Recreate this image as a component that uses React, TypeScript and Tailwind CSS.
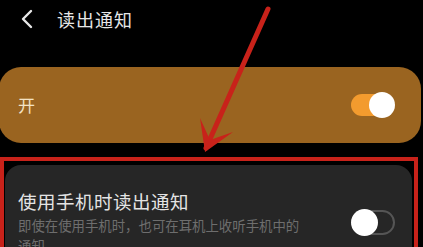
import React from "react";

export default function App() {
  return (
    <div
      className="relative w-[423px] h-[247px] overflow-hidden bg-black"
      style={{ fontFamily: '"Noto Sans CJK SC", "Noto Sans", sans-serif' }}
    >
      {/* header */}
      <div className="flex items-center h-[38px] pl-[20px]">
        <svg width="14" height="20" viewBox="0 0 14 20" className="mr-[23px]">
          <path d="M11 2 L3 10 L11 18" stroke="#e8e8e8" strokeWidth="2.4" fill="none" strokeLinecap="round" strokeLinejoin="round" />
        </svg>
        <span className="text-[18px] leading-none text-[#e6e6e6] tracking-[1px]">读出通知</span>
      </div>

      {/* orange card */}
      <div className="mt-[29px] -ml-[1px] w-[422px] h-[76px] rounded-[22px] bg-[#9a6420] flex items-center justify-between pl-[19px] pr-[28px]">
        <span className="text-[17px] text-[#f3e2c4]">开</span>
        <div className="flex items-center justify-end w-[42px] h-[22px] rounded-full bg-[#f39b2e]">
          <div className="-mr-[2px] w-[26px] h-[26px] rounded-full bg-white shrink-0" />
        </div>
      </div>

      {/* dark card */}
      <div className="mt-[22px] ml-[5px] w-[407px] h-[100px] rounded-t-[16px] bg-[#262626] pl-[13px] pr-[17px] pt-[24px] flex items-start justify-between">
        <div className="flex flex-col">
          <div className="text-[18.5px] leading-[24px] text-[#e4e4e4] tracking-[0.5px]">使用手机时读出通知</div>
          <div className="mt-[2px] w-[284px] text-[13.4px] leading-[20px] text-[#6e6e6e]">
            即使在使用手机时，也可在耳机上收听手机中的通知。
          </div>
        </div>
        <div className="mt-[21px] flex items-center w-[43px] h-[25px] rounded-full border-2 border-[#555555]">
          <div className="-ml-[3px] w-[27px] h-[27px] rounded-full bg-white shrink-0" />
        </div>
      </div>

      {/* red annotation box */}
      <div className="absolute left-0 top-[157px] w-[418px] h-[110px] border-[4px] border-[#c8221a]" />

      {/* red arrow */}
      <svg className="absolute left-0 top-0" width="423" height="247" viewBox="0 0 423 247">
        <path d="M268 9 L206 148" stroke="#c8221a" strokeWidth="5" strokeLinecap="round" fill="none" />
        <path d="M205 152 L200 118 L210 140 L233 132 Z" fill="#c8221a" />
      </svg>
    </div>
  );
}
